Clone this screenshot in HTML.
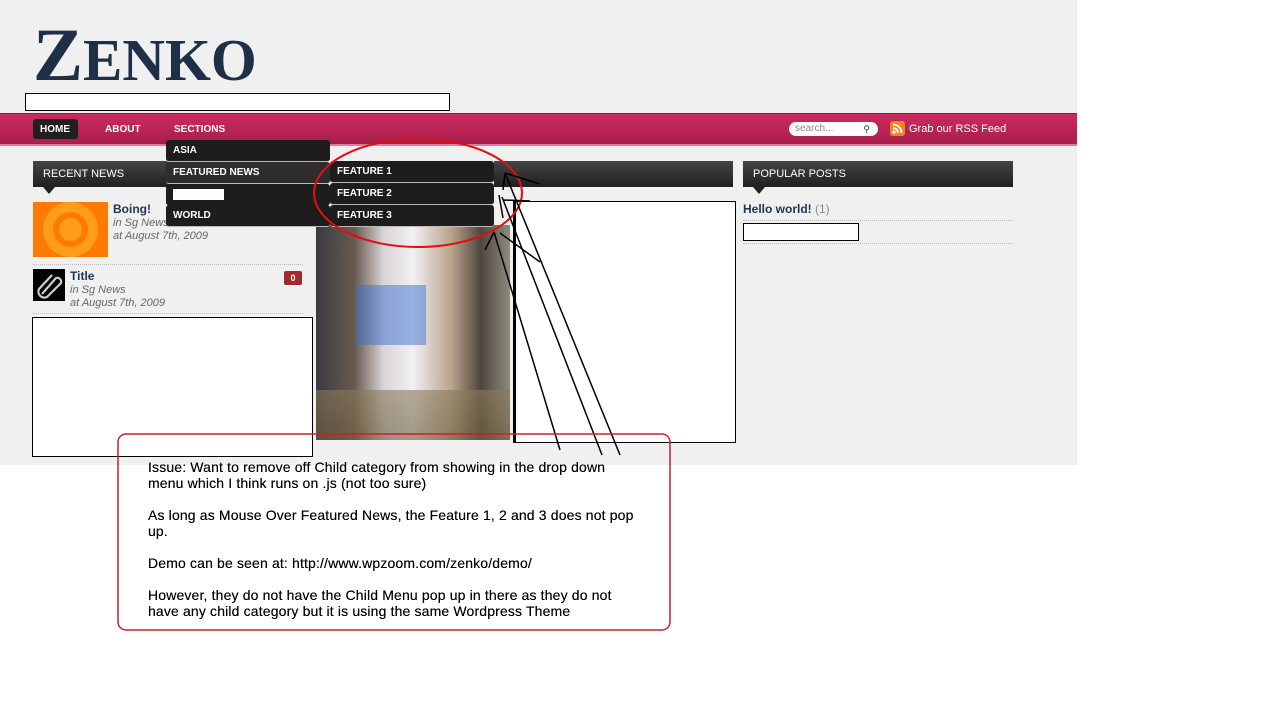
<!DOCTYPE html>
<html><head><meta charset="utf-8">
<style>
*{margin:0;padding:0;box-sizing:border-box}
body{width:1280px;height:727px;background:#fff;position:relative;overflow:hidden;font-family:"Liberation Sans",Arial,sans-serif}
.a{position:absolute}
#bg{left:0;top:0;width:1077px;height:465px;background:#f0f0f0}
#logo{left:33px;top:18px;color:#1f2f47;font-family:"Liberation Serif",serif;font-weight:bold;white-space:nowrap;line-height:1}
#nav{left:0;top:113px;width:1077px;height:33px;background:linear-gradient(#cc2b5e,#a81e4a);border-top:1px solid #8e1a3d;border-bottom:2px solid #e07a9a}
.nv{color:#fff;font-size:10px;font-weight:bold;top:124px}
.box{background:#fff;border:1px solid #000}
.dd{background:#1e1c1d;color:#fff;font-size:10px;font-weight:bold;padding-left:7px;line-height:21px;border-radius:3px;border-bottom:1px solid #bbb}
.hdr{background:linear-gradient(#444,#202020);color:#fff;font-size:11px;line-height:26px;padding-left:10px}
.tri{width:0;height:0;border-left:6px solid transparent;border-right:6px solid transparent;border-top:7px solid #222}
.sm{font-size:11px;color:#666;font-style:italic}
.dot{border-top:1px dotted #bbb;height:0}
#note{left:148px;top:459px;font-size:14px;letter-spacing:0.15px;line-height:16px;color:#000;white-space:nowrap;text-shadow:0 0 .3px #000}
#note p{margin-bottom:16px}
</style></head><body>
<div id="bg" class="a"></div>
<div id="logo" class="a"><span style="font-size:75px">Z</span><span style="font-size:59px">ENKO</span></div>
<div class="a box" style="left:25px;top:93px;width:425px;height:18px"></div>
<div id="nav" class="a"></div>
<div class="a" style="left:33px;top:119px;width:45px;height:20px;background:#231f20;border-radius:3px"></div>
<div class="a nv" style="left:40px">HOME</div>
<div class="a nv" style="left:105px">ABOUT</div>
<div class="a nv" style="left:174px">SECTIONS</div>
<div class="a" style="left:789px;top:122px;width:89px;height:14px;background:#fff;border-radius:7px;font-size:10px;color:#888;padding-left:6px;line-height:14px">search...<span style="position:absolute;right:8px;color:#333;font-size:9px">&#9906;</span></div>
<div class="a" style="left:890px;top:121px;width:15px;height:15px;background:#f58220;border-radius:3px"><svg width="15" height="15"><circle cx="4" cy="11" r="1.6" fill="#fff"/><path d="M3 7a5 5 0 0 1 5 5M3 3.5a8.5 8.5 0 0 1 8.5 8.5" stroke="#fff" stroke-width="1.8" fill="none"/></svg></div>
<div class="a" style="left:909px;top:123px;color:#fff;font-size:11px">Grab our RSS Feed</div>

<div class="a hdr" style="left:33px;top:161px;width:280px;height:26px">RECENT NEWS</div>
<div class="a tri" style="left:43px;top:187px"></div>
<div class="a hdr" style="left:494px;top:161px;width:239px;height:26px"></div>
<div class="a" style="left:33px;top:202px;width:75px;height:55px;background:#ff7a00;overflow:hidden"><div style="position:absolute;left:10px;top:0px;width:55px;height:55px;border-radius:50%;background:#ff9c1a"></div><div style="position:absolute;left:20px;top:10px;width:35px;height:35px;border-radius:50%;background:#ff7a00"></div><div style="position:absolute;left:26px;top:16px;width:23px;height:23px;border-radius:50%;background:#ff9c1a"></div></div>
<div class="a" style="left:113px;top:202px;font-size:12px;font-weight:bold;color:#1e3550">Boing!</div>
<div class="a sm" style="left:113px;top:217px">in Sg News</div>
<div class="a sm" style="left:113px;top:230px">at August 7th, 2009</div>
<div class="a dot" style="left:33px;top:264px;width:270px"></div>
<div class="a" style="left:33px;top:269px;width:32px;height:32px;background:#000"><svg width="32" height="32"><path d="M9 25L23 9a4 4 0 0 1 5 5L14 28a6 6 0 0 1-8-8L19 6" stroke="#ccc" stroke-width="2.2" fill="none"/></svg></div>
<div class="a" style="left:70px;top:269px;font-size:12px;font-weight:bold;color:#1e3550">Title</div>
<div class="a sm" style="left:70px;top:284px">in Sg News</div>
<div class="a sm" style="left:70px;top:297px">at August 7th, 2009</div>
<div class="a" style="left:284px;top:271px;width:18px;height:14px;background:#a32a2a;color:#fff;font-size:9px;font-weight:bold;text-align:center;line-height:14px;border-radius:2px">0</div>
<div class="a dot" style="left:33px;top:313px;width:270px"></div>
<div class="a box" style="left:32px;top:317px;width:281px;height:140px"></div>

<div class="a" style="left:316px;top:225px;width:194px;height:215px;background:linear-gradient(90deg,#3a3a42 0%,#6a5a50 20%,#d9d5d8 35%,#f2f0f4 50%,#b8a28a 70%,#50463e 85%,#8c8c7c 100%)">
<div style="position:absolute;left:40px;top:60px;width:70px;height:60px;background:#3b6fd0;opacity:.5"></div>
<div style="position:absolute;left:0;bottom:0;width:194px;height:50px;background:linear-gradient(#8a7a5a,#6e6040);opacity:.6"></div></div>
<div class="a box" style="left:513px;top:201px;width:223px;height:242px;border-left-width:3px"></div>

<div class="a hdr" style="left:743px;top:161px;width:270px;height:26px">POPULAR POSTS</div>
<div class="a tri" style="left:753px;top:187px"></div>
<div class="a" style="left:743px;top:202px;font-size:12px;color:#1e3550"><b>Hello world!</b> <span style="color:#888">(1)</span></div>
<div class="a dot" style="left:743px;top:220px;width:270px"></div>
<div class="a box" style="left:743px;top:223px;width:116px;height:18px"></div>
<div class="a dot" style="left:743px;top:243px;width:270px"></div>

<div class="a dd" style="left:166px;top:140px;width:164px">ASIA</div>
<div class="a dd" style="left:166px;top:162px;width:164px;background:#2e2c2d">FEATURED NEWS</div>
<div class="a dd" style="left:166px;top:184px;width:164px;height:22px"><div style="position:absolute;left:7px;top:5px;width:51px;height:11px;background:#fff"></div></div>
<div class="a dd" style="left:166px;top:205px;width:164px">WORLD</div>
<div class="a dd" style="left:330px;top:161px;width:164px">FEATURE 1</div>
<div class="a dd" style="left:330px;top:183px;width:164px">FEATURE 2</div>
<div class="a dd" style="left:330px;top:205px;width:164px">FEATURE 3</div>

<svg class="a" style="left:0;top:0" width="1280" height="727">
<ellipse cx="418" cy="193" rx="104" ry="54" fill="none" stroke="#d11" stroke-width="2"/>
<g stroke="#000" stroke-width="1.5" fill="none">
<path d="M505 173L620 455M505 173L540 184M505 173L503 190"/>
<path d="M502 197L602 455M499 195L503 218M503 200L530 201"/>
<path d="M494 232L560 450M494 232L485 250M500 233L540 262"/>
</g>
<rect x="118" y="434" width="552" height="196" rx="8" fill="none" stroke="#c8202f" stroke-width="1.5"/>
</svg>
<div id="note" class="a">
<p>Issue: Want to remove off Child category from showing in the drop down<br>menu which I think runs on .js (not too sure)</p>
<p>As long as Mouse Over Featured News, the Feature 1, 2 and 3 does not pop<br>up.</p>
<p>Demo can be seen at: http://www.wpzoom.com/zenko/demo/</p>
<p>However, they do not have the Child Menu pop up in there as they do not<br>have any child category but it is using the same Wordpress Theme</p>
</div>
</body></html>
